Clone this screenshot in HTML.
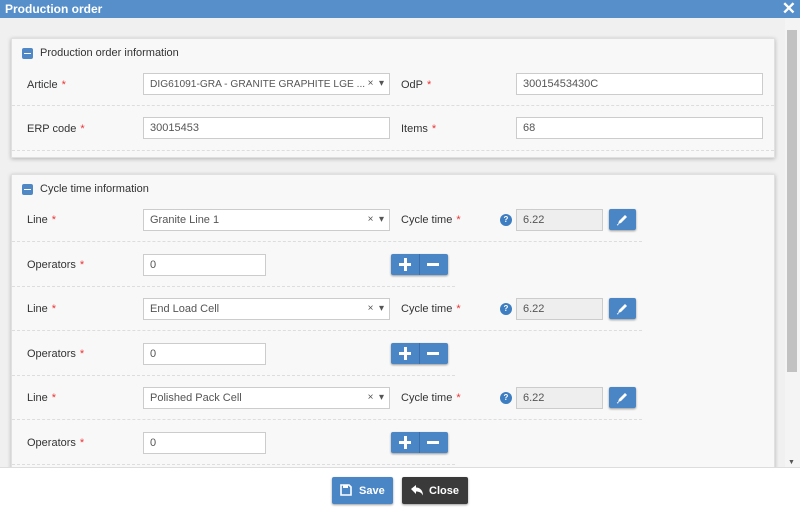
<!DOCTYPE html>
<html><head><style>
*{box-sizing:border-box;margin:0;padding:0}
body{width:800px;height:514px;overflow:hidden;font-family:"Liberation Sans",sans-serif;font-size:11px;color:#333;background:#fff;position:relative}
.hdr{position:absolute;left:0;top:0;width:800px;height:18px;background:#568fc9;color:#fff;font-weight:bold;font-size:12px;padding:2px 5px}
.x{position:absolute;right:4px;top:-1px;font-size:17px;color:#fff;font-weight:bold}
.body{position:absolute;left:0;top:18px;width:800px;height:449px;background:#f0f0f0;overflow:hidden}
.sb{position:absolute;left:785px;top:18px;width:15px;height:449px;background:#f4f4f4}
.thumb{position:absolute;left:787px;top:30px;width:10px;height:342px;background:#c1c1c1}
.panel{position:absolute;left:11px;width:764px;background:#f8f8f8;border:1px solid #e0e0e0;box-shadow:0 1px 4px rgba(0,0,0,.25)}
.ph{position:absolute;left:11px;font-size:11px}
.tog{position:absolute;left:-1px;top:1px;width:11px;height:11px;background:#4f88c4;border-radius:2px}
.tog:after{content:"";position:absolute;left:2px;top:5px;width:7px;height:1px;background:#fff}
.lab{position:absolute;font-size:11px;color:#333}
.lab b{color:#e33;font-weight:normal;margin-left:4px}
.inp{position:absolute;height:22px;background:#fff;border:1px solid #ccc;padding:4px 6px;font-size:11px;color:#555;white-space:nowrap;overflow:hidden}
.inp.dis{background:#eee}
.sel:after{content:"\00d7   \25BE";white-space:pre;position:absolute;right:5px;top:4px;color:#555;font-size:10px;background:#fff;padding-left:2px}
.sep{position:absolute;border-top:1px dashed #ddd}
.btn{position:absolute;background:#4a86c5;border-radius:2px;box-shadow:0 1px 2px rgba(0,0,0,.4)}
.help{position:absolute;width:12px;height:12px;border-radius:50%;background:#3d7dc2;color:#fff;font-size:8px;font-weight:bold;text-align:center;line-height:12px}
.foot{position:absolute;left:0;top:467px;width:800px;height:47px;background:#fff;border-top:1px solid #ddd}
</style></head><body>
<div class="hdr">Production order<span class="x">✕</span></div>
<div class="body">
<div class="panel" style="top:20px;height:120px">
 <div class="ph" style="top:8px"><span class="tog"></span><span style="margin-left:17px">Production order information</span></div>
 <div class="lab" style="left:15px;top:40px">Article<b>*</b></div>
 <div class="inp sel" style="left:131px;top:34px;width:247px;font-size:10.2px;padding-top:5px">DIG61091-GRA - GRANITE GRAPHITE LGE ...</div>
 <div class="lab" style="left:389px;top:40px">OdP<b>*</b></div>
 <div class="inp" style="left:504px;top:34px;width:247px">30015453430C</div>
 <div class="sep" style="left:0;top:66px;width:762px"></div>
 <div class="lab" style="left:15px;top:84px">ERP code<b>*</b></div>
 <div class="inp" style="left:131px;top:78px;width:247px">30015453</div>
 <div class="lab" style="left:389px;top:84px">Items<b>*</b></div>
 <div class="inp" style="left:504px;top:78px;width:247px">68</div>
 <div class="sep" style="left:0;top:111px;width:762px"></div>
</div>
<div class="panel" style="top:156px;height:310px">
 <div class="ph" style="top:8px"><span class="tog"></span><span style="margin-left:17px">Cycle time information</span></div>
</div>
</div>
<div id="rows"></div>
<div class="sb"></div><div class="thumb"></div>
<div style="position:absolute;left:788px;top:459px;font-size:7px;color:#555">▼</div>
<div class="foot">
 <div class="btn" style="left:332px;top:9px;width:61px;height:27px;color:#fff;font-weight:bold;font-size:11px;padding:8px 0 0 27px">Save
  <svg style="position:absolute;left:8px;top:7px" width="12" height="12" viewBox="0 0 12 12"><path d="M1 1h8l2 2v8H1z" fill="none" stroke="#fff" stroke-width="1.6"/><rect x="3" y="1" width="5" height="3" fill="#fff"/></svg></div>
 <div class="btn" style="left:402px;top:9px;width:66px;height:27px;background:#3a3a3a;color:#fff;font-weight:bold;font-size:11px;padding:8px 0 0 27px">Close
  <svg style="position:absolute;left:9px;top:8px" width="12" height="11" viewBox="0 0 12 11"><path d="M0 4L5 0v2.5c4 0 7 3 7 8c-1.5-3-4-4-7-4V9z" fill="#fff"/></svg></div>
</div>
<script>
var names=["Granite Line 1","End Load Cell","Polished Pack Cell"],h="";
for(var i=0;i<3;i++){var y=209+i*89;
h+='<div class="lab" style="left:27px;top:'+(y+5)+'px">Line<b>*</b></div>';
h+='<div class="inp sel" style="left:143px;top:'+y+'px;width:247px">'+names[i]+'</div>';
h+='<div class="lab" style="left:401px;top:'+(y+5)+'px">Cycle time<b>*</b></div>';
h+='<div class="help" style="left:500px;top:'+(y+5)+'px">?</div>';
h+='<div class="inp dis" style="left:516px;top:'+y+'px;width:87px">6.22</div>';
h+='<div class="btn" style="left:609px;top:'+y+'px;width:27px;height:21px"><svg style="position:absolute;left:7px;top:4px" width="13" height="13" viewBox="0 0 13 13"><path d="M2 11l1-3 6-6 2 2-6 6z" fill="#fff"/><path d="M1 12l1.5-0.5" stroke="#fff"/></svg></div>';
h+='<div class="sep" style="left:12px;top:'+(y+32)+'px;width:630px"></div>';
var y2=y+45;
h+='<div class="lab" style="left:27px;top:'+(y2+5)+'px">Operators<b>*</b></div>';
h+='<div class="inp" style="left:143px;top:'+y2+'px;width:123px">0</div>';
h+='<div class="btn" style="left:391px;top:'+y2+'px;width:57px;height:21px"><div style="position:absolute;left:28px;top:0;width:1px;height:21px;background:#3a6fa8"></div><div style="position:absolute;left:8px;top:9px;width:12px;height:3px;background:#fff"></div><div style="position:absolute;left:12.5px;top:4px;width:3px;height:13px;background:#fff"></div><div style="position:absolute;left:36px;top:9px;width:12px;height:3px;background:#fff"></div></div>';
h+='<div class="sep" style="left:12px;top:'+(y2+32)+'px;width:443px"></div>';}
document.getElementById("rows").innerHTML=h;
</script>
</body></html>
